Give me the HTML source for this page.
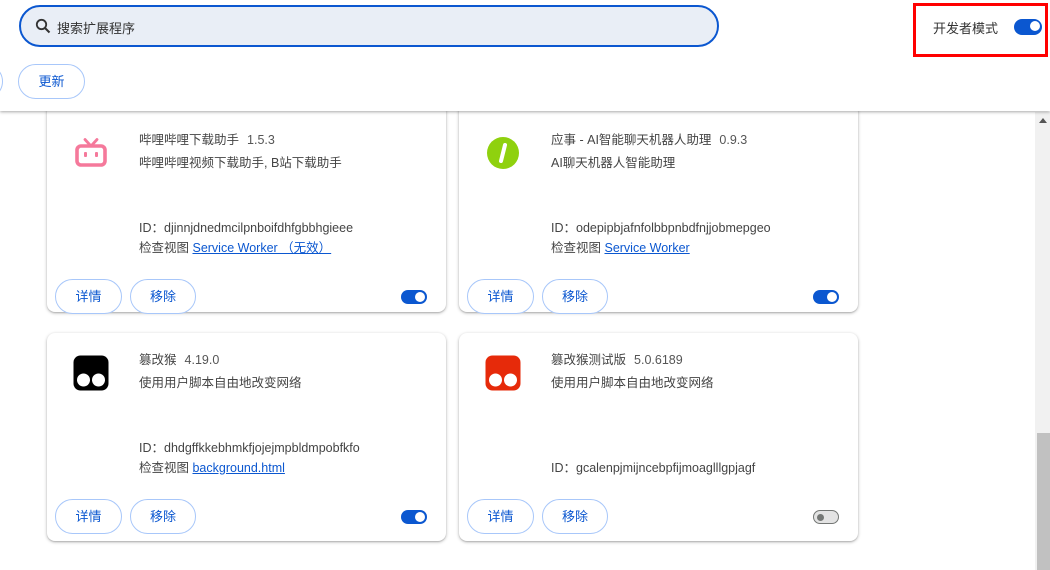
<!DOCTYPE html>
<html><head><meta charset="utf-8"><style>
*{box-sizing:border-box;margin:0;padding:0}
body{width:1050px;height:570px;overflow:hidden;background:#fff;font-family:"Liberation Sans","Noto Sans CJK SC",sans-serif;position:relative;color:#1f1f1f}
.hdr{position:absolute;left:0;top:0;width:1050px;height:111px;background:#fff;z-index:5;box-shadow:0 1px 3px rgba(0,0,0,.35)}
.search{position:absolute;left:19px;top:5px;width:700px;height:42px;border:2px solid #0b57d0;border-radius:21px;background:#e9eef6}
.search span{position:absolute;left:36px;top:11px;font-size:13px;color:#333}
.btn{position:absolute;height:35px;border:1px solid #a8c7fa;border-radius:18px;background:#fff;color:#0b57d0;font-size:13px;text-align:center;line-height:33px}
.red{position:absolute;left:913px;top:3px;width:135px;height:54px;border:3px solid #f00}
.tog{position:absolute;width:26px;height:14px;border-radius:7px;background:#0b57d0}
.tog::after{content:"";position:absolute;right:2px;top:2px;width:10px;height:10px;border-radius:50%;background:#fff}
.tog.off{background:#e3e3e3;border:1px solid #747775}
.tog.off::after{left:3px;top:3px;width:7px;height:7px;background:#747775}
.card{position:absolute;width:399px;height:208px;background:#fff;border-radius:8px;box-shadow:0 1px 3px rgba(0,0,0,.3),0 1px 1px rgba(0,0,0,.1)}
.t{position:absolute;left:92px;font-size:12.5px;color:#444;white-space:nowrap}
.v{color:#555;margin-left:8px}
a{color:#0b57d0;text-decoration:underline}
.sb{position:absolute;left:1035px;top:112px;width:15px;height:458px;background:#f1f1f1}
.thumb{position:absolute;left:1037px;top:433px;width:13px;height:137px;background:#c1c1c1}
</style></head><body>
<div class="hdr">
 <div class="search">
  <svg style="position:absolute;left:14px;top:11px" width="16" height="16" viewBox="0 0 16 16"><circle cx="6.5" cy="6.5" r="4.7" fill="none" stroke="#333" stroke-width="1.8"/><path d="M10 10l4.5 4.5" stroke="#333" stroke-width="2"/></svg>
  <span>搜索扩展程序</span>
 </div>
 <div class="btn" style="left:-60px;top:64px;width:63px"></div>
 <div class="btn" style="left:18px;top:64px;width:67px">更新</div>
 <div class="red"></div>
 <div style="position:absolute;left:933px;top:18px;font-size:13px;color:#333">开发者模式</div>
 <div class="tog" style="left:1014px;top:19px;height:16px;width:28px;border-radius:8px"></div>
</div>

<div class="card" style="left:47px;top:104px">
 <svg style="position:absolute;left:28px;top:34px" width="32" height="30" viewBox="0 0 32 30"><path d="M10 1.5l5 5.5M22 1.5l-5 5.5" stroke="#f5799b" stroke-width="2.8" stroke-linecap="round"/><rect x="2" y="8" width="28" height="19" rx="4" fill="none" stroke="#f5799b" stroke-width="3.6"/><rect x="9" y="14" width="3" height="5" rx="1" fill="#f5799b"/><rect x="20" y="14" width="3" height="5" rx="1" fill="#f5799b"/></svg>
 <div class="t" style="top:25px">哔哩哔哩下载助手<span class="v">1.5.3</span></div>
 <div class="t" style="top:48px">哔哩哔哩视频下载助手, B站下载助手</div>
 <div class="t" style="top:113px">ID：djinnjdnedmcilpnboifdhfgbbhgieee</div>
 <div class="t" style="top:133px">检查视图 <a>Service Worker （无效）</a></div>
 <div class="btn" style="left:8px;top:175px;width:67px">详情</div>
 <div class="btn" style="left:83px;top:175px;width:66px">移除</div>
 <div class="tog" style="left:354px;top:186px"></div>
</div>

<div class="card" style="left:459px;top:104px">
 <svg style="position:absolute;left:26px;top:31px" width="36" height="36" viewBox="0 0 36 36"><circle cx="18" cy="18" r="16" fill="#8fd10e"/><path d="M20 10l-4 16" stroke="#fff" stroke-width="4" stroke-linecap="round"/></svg>
 <div class="t" style="top:25px">应事 - AI智能聊天机器人助理<span class="v">0.9.3</span></div>
 <div class="t" style="top:48px">AI聊天机器人智能助理</div>
 <div class="t" style="top:113px">ID：odepipbjafnfolbbpnbdfnjjobmepgeo</div>
 <div class="t" style="top:133px">检查视图 <a>Service Worker</a></div>
 <div class="btn" style="left:8px;top:175px;width:67px">详情</div>
 <div class="btn" style="left:83px;top:175px;width:66px">移除</div>
 <div class="tog" style="left:354px;top:186px"></div>
</div>

<div class="card" style="left:47px;top:333px">
 <svg style="position:absolute;left:26px;top:22px" width="36" height="36" viewBox="0 0 36 36"><rect x="0.5" y="0.5" width="35" height="35" rx="7" fill="#000"/><circle cx="10.5" cy="25" r="6.5" fill="#fff"/><circle cx="25.5" cy="25" r="6.5" fill="#fff"/></svg>
 <div class="t" style="top:16px">篡改猴<span class="v">4.19.0</span></div>
 <div class="t" style="top:39px">使用用户脚本自由地改变网络</div>
 <div class="t" style="top:104px">ID：dhdgffkkebhmkfjojejmpbldmpobfkfo</div>
 <div class="t" style="top:124px">检查视图 <a>background.html</a></div>
 <div class="btn" style="left:8px;top:166px;width:67px">详情</div>
 <div class="btn" style="left:83px;top:166px;width:66px">移除</div>
 <div class="tog" style="left:354px;top:177px"></div>
</div>

<div class="card" style="left:459px;top:333px">
 <svg style="position:absolute;left:26px;top:22px" width="36" height="36" viewBox="0 0 36 36"><rect x="0.5" y="0.5" width="35" height="35" rx="7" fill="#e62a0a"/><circle cx="10.5" cy="25" r="6.5" fill="#fff"/><circle cx="25.5" cy="25" r="6.5" fill="#fff"/></svg>
 <div class="t" style="top:16px">篡改猴测试版<span class="v">5.0.6189</span></div>
 <div class="t" style="top:39px">使用用户脚本自由地改变网络</div>
 <div class="t" style="top:124px">ID：gcalenpjmijncebpfijmoaglllgpjagf</div>
 <div class="btn" style="left:8px;top:166px;width:67px">详情</div>
 <div class="btn" style="left:83px;top:166px;width:66px">移除</div>
 <div class="tog off" style="left:354px;top:177px"></div>
</div>

<div class="sb"></div>
<div class="thumb"></div>
<svg style="position:absolute;left:1039px;top:118px" width="8" height="5" viewBox="0 0 8 5"><path d="M0 5L4 0L8 5Z" fill="#555"/></svg>
</body></html>
